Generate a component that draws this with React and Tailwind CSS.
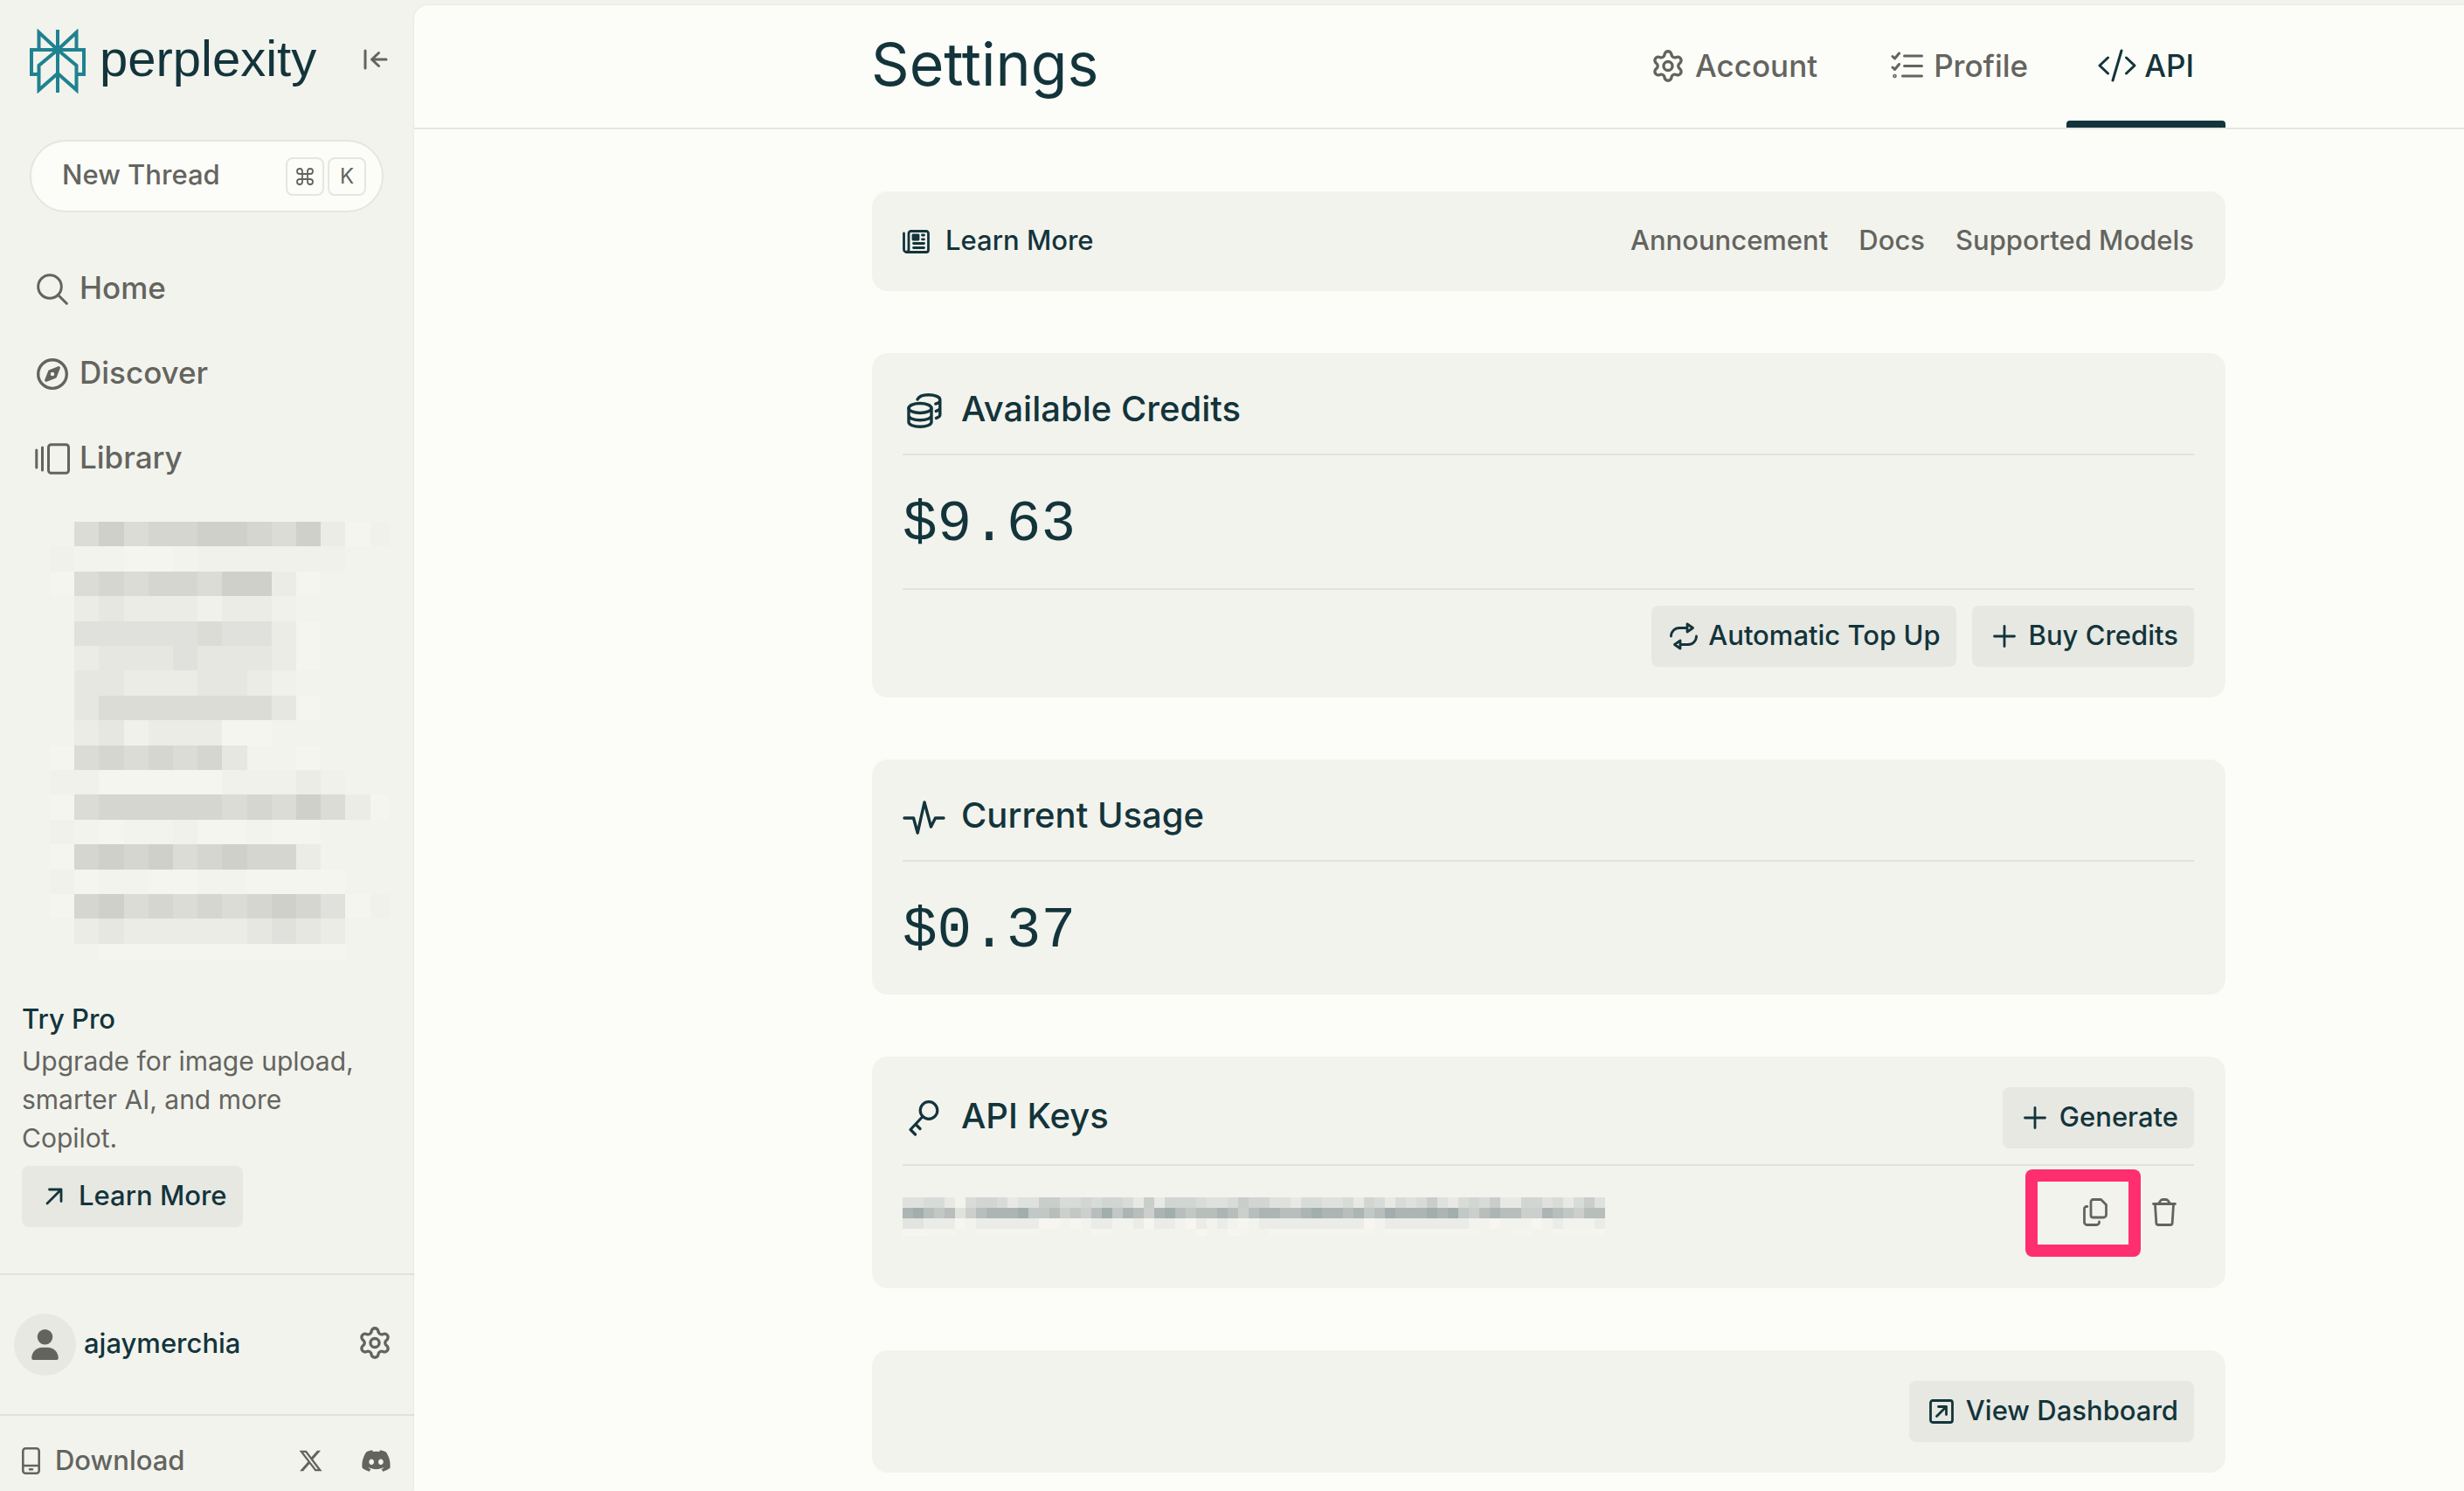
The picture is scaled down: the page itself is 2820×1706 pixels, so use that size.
import React from "react";
import { Command, Settings } from "lucide-react";
import { FaDiscord, FaRegCompass, FaUser, FaXTwitter } from "react-icons/fa6";

function Glyph({ w, h, stroke = 3, className = "", children }) {
  return (
    <svg
      aria-hidden="true"
      width={w}
      height={h}
      viewBox={`0 0 ${w} ${h}`}
      fill="none"
      stroke="currentColor"
      strokeWidth={stroke}
      strokeLinecap="round"
      strokeLinejoin="round"
      className={`shrink-0 ${className}`}
    >
      {children}
    </svg>
  );
}

const LogoMark = () => (
  <svg aria-hidden="true" width="64" height="74" viewBox="0 0 64 74" fill="none" stroke="#1f8290" strokeWidth="4">
    <path d="M32 1v72" />
    <path d="M32 24 10.5 4v20M32 24 53.5 4v20" />
    <path d="M10.5 52H2V24h60v28h-8.500" />
    <path d="M32 24 10.500 42v28L32 51M32 24l21.500 18v28L32 51" />
  </svg>
);

const CollapseIcon = () => (
  <Glyph w={28} h={24}>
    <path d="M2 2v20M9.500 12H26M17.500 4.500l-8 7.500 8 7.500" />
  </Glyph>
);

const SearchIcon = () => (
  <Glyph w={36} h={36}>
    <circle cx="15" cy="15" r="13.300" />
    <path d="m24.500 24.500 9.800 9.800" />
  </Glyph>
);

const LibraryIcon = () => (
  <Glyph w={40} h={36}>
    <path d="M1.800 8v20M8.500 5v26" />
    <rect x="15.500" y="1.800" width="23" height="32.500" rx="3" />
  </Glyph>
);

const GearIcon = () => (
  <Settings aria-hidden="true" className="h-[37px] w-[36px] shrink-0" viewBox="1.4 1 21.2 22" strokeWidth={2} />
);

const ChecklistIcon = () => (
  <Glyph w={37} h={32}>
    <path d="M2 5.500 4.500 8 9.500 2M2 18l2.500 2.500 5-6M15.500 5h20M15.500 16.500h20M13.500 28h22" />
    <circle cx="4.500" cy="28" r="0.800" />
  </Glyph>
);

const CodeIcon = () => (
  <Glyph w={44} h={38}>
    <path d="M11.500 10 2 19l9.500 9M32.500 10 42 19l-9.500 9M27 2l-10 34" />
  </Glyph>
);

const NewsIcon = () => (
  <Glyph w={31} h={27} stroke={2.8}>
    <path d="M1.500 4v18.500a3 3 0 0 0 3 3H27a2.500 2.500 0 0 0 2.500-2.500V4A2.500 2.500 0 0 0 27 1.500H9.500A2.500 2.500 0 0 0 7 4v18.500a3 3 0 0 1-2.700 3" />
    <path d="M12.500 15.500h12M12.500 20.500h12M22.500 6h2M22.500 10.800h2" />
    <rect x="12" y="6" width="6" height="5" fill="currentColor" />
  </Glyph>
);

const CoinsIcon = () => (
  <Glyph w={40} h={40} stroke={3.400}>
    <ellipse cx="15" cy="17" rx="13" ry="5.500" />
    <path d="M2 17v16c0 3 5.800 5.300 13 5.300S28 36 28 33V17M2 25.500c0 3 5.800 5.300 13 5.300s13-2.300 13-5.300" />
    <path d="M12 7c1.500-3 6.500-5.200 12.500-5.200 7.500 0 13.300 2.300 13.300 5.400v17.500c0 1.500-1.800 2.800-4.300 3.700M37.800 8c0 1.700-2 3.200-5 4.100M37.800 16.500c0 1.600-1.800 3-4.500 3.900" />
  </Glyph>
);

const PulseIcon = () => (
  <Glyph w={49} h={39} stroke={3.400}>
    <path d="M2 20h10.500l4.700 17L25 2l7.500 28 5-10H47" />
  </Glyph>
);

const KeyIcon = () => (
  <Glyph w={35} h={41} stroke={3.200}>
    <circle cx="23" cy="11.500" r="9.800" />
    <path d="M16 18.500 2 33.500l5.500 5.500M8 27.500l5 5" />
  </Glyph>
);

const RepeatIcon = () => (
  <Glyph w={32} h={32} stroke={2.800}>
    <path d="M1.500 16a9.500 9.500 0 0 1 9.500-9.500h9V2l6.500 4.500L20 11V6.500M30.500 16A9.500 9.500 0 0 1 21 25.500h-9V21l-6.500 4.500L12 30v-4.500" />
  </Glyph>
);

const PlusIcon = () => (
  <Glyph w={26} h={26} stroke={2.800}>
    <path d="M13 1.500v23M1.500 13h23" />
  </Glyph>
);

const ArrowIcon = () => (
  <Glyph w={20} h={20} stroke={2.800}>
    <path d="M2 18 18 2M4.500 2H18v13.500" />
  </Glyph>
);

const OpenIcon = () => (
  <Glyph w={28} h={28} stroke={2.800}>
    <rect x="1.500" y="1.500" width="25" height="25" rx="2.500" />
    <path d="M8.500 19.500 19 9M10.500 8.500h9v9" />
  </Glyph>
);

const CopyIcon = () => (
  <Glyph w={28} h={32} stroke={2.800}>
    <path d="M11.500 1.500h9l6 6V19a3 3 0 0 1-3 3h-12a2.500 2.500 0 0 1-2.500-2.500V4a2.500 2.500 0 0 1 2.500-2.500z" />
    <path d="M4.800 9.500H4A2.500 2.500 0 0 0 1.500 12v15.500a3 3 0 0 0 3 3h11a3 3 0 0 0 3-3V27" />
  </Glyph>
);

const TrashIcon = () => (
  <Glyph w={28} h={32} stroke={2.800}>
    <path d="M1.500 6.500h25M7.500 6l2.300-3.200a3 3 0 0 1 2.400-1.300h3.600a3 3 0 0 1 2.400 1.300L20.500 6M3.500 7l1.300 21a2.500 2.500 0 0 0 2.500 2.500h13.400a2.500 2.500 0 0 0 2.500-2.500L24.500 7" />
  </Glyph>
);

const PhoneIcon = () => (
  <Glyph w={21} h={31} stroke={2.600}>
    <rect x="1.300" y="1.300" width="18.400" height="28.400" rx="3" />
    <path d="M1.500 21h18M9 25.300h3" />
  </Glyph>
);

const SHADES = {
  w: "#f4f5ef", 1: "#f0f1eb", 2: "#ebece6", 3: "#e6e7e1", 4: "#e0e1dc", 5: "#dbdcd6", 6: "#d5d6d0", 7: "#cfd0ca",
  A: "#c9cecb", B: "#d1d6d2", C: "#d8dcd8", D: "#dfe1de", E: "#e8e9e4",
  a: "#a2aeae", b: "#adb5b4", c: "#b7bebc", d: "#c2c8c6", e: "#cccfcc", f: "#e0e2de",
  g: "#e1e4df", h: "#ebece7", i: "#f7f5f0",
};

function Mosaic({ rows, cw, ch, width, height, label }) {
  return (
    <svg role="img" aria-label={label} width={width} height={height} viewBox={`0 0 ${width} ${height}`} shapeRendering="crispEdges" className="block shrink-0">
      {rows.map((row, r) =>
        [...row].map((k, c) =>
          SHADES[k] ? (
            <rect key={`${r}-${c}`} x={c * cw} y={r * ch} width={cw} height={ch} fill={SHADES[k]} />
          ) : null
        )
      )}
    </svg>
  );
}

const THREAD_ROWS = [
  ".57566776572w1",
  "1..ww.111111",
  "w565665772w",
  ".232221221",
  ".444445442w",
  ".233343332w",
  ".332223321",
  ".355555553w",
  ".231222ww",
  "w5656563..w",
  "11wwwww11121",
  "w566666565752w",
  "1.w..1ww.ww",
  "w6767567662",
  "1w..ww..wwww",
  "w67565656764w1",
  ".23222223432",
  "..wwwwwwwwww",
];

const KEY_ROWS = [
  "DDCCE.CBBCEDDAACCBCBBCEAEBBBCDDCABBDDECCDDCEBCECDCADECBCAEEBBDCECAD",
  "bacdcfecbbbaddcedecadbcebacdccbcecbbccbabbcbdcabbbabadecbcceebcdecc",
  "gghhhi.hhhhhhii.i.hh..hihh.ih.h.i.hhhhhhhhhhi.hhhhhhhh..i...i.h...h",
  "iiwww..wwwwww.....ww........i..iw..wwwwwwwwww.wwwwwwwww...ww..wwwww",
];

const Slot = ({ children }) => <span className="flex w-[44px] shrink-0 justify-center">{children}</span>;
const SmallSlot = ({ children }) => <span className="flex w-[38px] shrink-0 justify-center">{children}</span>;
const Label = ({ children }) => <span className="pb-[2px]">{children}</span>;

function ActionButton({ icon, children }) {
  return (
    <button type="button" className="flex h-[70px] items-center gap-[9px] rounded-lg bg-[#e7e8e2] px-[18px] text-[31px] leading-[44px] font-medium whitespace-nowrap text-[#13343b]">
      <SmallSlot>{icon}</SmallSlot>
      <Label>{children}</Label>
    </button>
  );
}

function CardTitle({ icon, children }) {
  return (
    <h2 className="flex h-[62px] items-center gap-[18px] text-[40px] font-medium whitespace-nowrap">
      <span className="flex w-[49px] justify-center">{icon}</span>
      <span className="pb-1">{children}</span>
    </h2>
  );
}

const Amount = ({ children }) => (
  <p className="pt-10 pb-8 font-['Liberation_Mono',monospace] text-[66px] leading-[80px]">{children}</p>
);

const NAV = [
  ["Home", <SearchIcon />],
  ["Discover", <FaRegCompass aria-hidden="true" className="size-[36px]" />],
  ["Library", <LibraryIcon />],
];

const TABS = [
  ["Account", <GearIcon />, false],
  ["Profile", <ChecklistIcon />, false],
  ["API", <CodeIcon />, true],
];

function Sidebar() {
  return (
    <aside className="flex min-h-screen w-[474px] shrink-0 flex-col text-[#64645f]">
      <div className="flex items-center justify-between pt-[33px] pr-[30px] pl-[34px]">
        <a href="#home" className="flex items-center gap-4 text-[#13343b]">
          <LogoMark />
          <span className="pb-[6px] font-['Liberation_Sans',sans-serif] text-[58px] leading-[68px]">perplexity</span>
        </a>
        <button type="button" aria-label="Collapse sidebar" className="pb-[5px]">
          <CollapseIcon />
        </button>
      </div>

      <button type="button" className="mt-[53px] mr-[35px] ml-[34px] flex h-[83px] items-center gap-1 rounded-full border-2 border-[#e5e6e0] bg-[#fcfdf8] pr-[18px] pl-[35px] text-[31px] font-medium">
        <span className="mr-auto pb-[2px]">New Thread</span>
        <kbd className="flex size-[44px] items-center justify-center rounded-lg border-2 border-[#e5e6e0]">
          <Command aria-label="Command" className="size-[24px]" strokeWidth={1.8} />
        </kbd>
        <kbd className="flex size-[44px] items-center justify-center rounded-lg border-2 border-[#e5e6e0] font-['Inter',sans-serif] text-[24px] font-normal">K</kbd>
      </button>

      <nav aria-label="Main" className="mt-[39px] flex flex-col pl-[38px]">
        {NAV.map(([label, icon]) => (
          <a key={label} href={`#${label.toLowerCase()}`} className="flex h-[97px] items-center gap-[9px] text-[35px] font-medium">
            <Slot>{icon}</Slot>
            <Label>{label}</Label>
          </a>
        ))}
      </nav>

      <div className="mt-[24px] pl-[57px]">
        <Mosaic rows={THREAD_ROWS} cw={28.2} ch={28.4} width={388} height={501} label="Recent threads, hidden" />
      </div>

      <section className="mt-auto flex flex-col items-start px-[25px] pb-[53px] leading-[44px]">
        <h2 className="pb-1 text-[31px] leading-[44px] font-medium text-[#13343b]">Try Pro</h2>
        <p className="max-w-[400px] pb-[10px] text-[30px] leading-[44px]">Upgrade for image upload, smarter AI, and more Copilot.</p>
        <ActionButton icon={<ArrowIcon />}>Learn More</ActionButton>
      </section>

      <div className="flex h-[161px] items-center gap-[9px] border-t-2 border-[#e1e2dd] pr-[27px] pl-4">
        <span className="flex size-[71px] items-center justify-center rounded-full bg-[#e7e8e2]">
          <FaUser aria-hidden="true" className="h-[35px] w-[31px]" />
        </span>
        <span className="mr-auto pb-[2px] text-[31px] font-medium text-[#13343b]">ajaymerchia</span>
        <button type="button" aria-label="Settings" className="pb-[5px]">
          <GearIcon />
        </button>
      </div>

      <div className="flex h-[88px] items-center border-t-2 border-[#e1e2dd] pt-4 pr-[26px] pl-4">
        <a href="#download" className="mr-auto flex items-center gap-[9px] text-[31px] font-medium">
          <SmallSlot><PhoneIcon /></SmallSlot>
          Download
        </a>
        <a href="#x" aria-label="X" className="mr-[43px]">
          <FaXTwitter className="size-[29px]" />
        </a>
        <a href="#discord" aria-label="Discord">
          <FaDiscord className="size-[35px]" />
        </a>
      </div>
    </aside>
  );
}

export default function App() {
  return (
    <div className="flex min-h-screen bg-[#f2f3ed] font-['Inter',sans-serif] text-[#13343b]">
      <Sidebar />
      <main className="mt-[6px] min-w-0 flex-1 rounded-tl-2xl bg-[#fcfdf8] shadow-[0_0_4px_rgba(0,0,0,0.06)]">
        <header className="flex h-[142px] items-center justify-between border-b-2 border-[#e5e6e0] pr-[273px] pl-[523px]">
          <h1 className="pb-[6px] text-[68px] leading-[80px]">Settings</h1>
          <nav aria-label="Settings sections" className="flex gap-2 self-stretch">
            {TABS.map(([label, icon, active]) => (
              <a
                key={label}
                href={`#${label.toLowerCase()}`}
                aria-current={active ? "page" : undefined}
                className={`relative flex items-center gap-[9px] px-9 pb-[2px] text-[35px] font-medium ${active ? "text-[#13343b]" : "text-[#64645f]"}`}
              >
                <Slot>{icon}</Slot>
                <span>{label}</span>
                {active && <span className="absolute inset-x-0 bottom-0 h-2 rounded-t bg-[#13343b]" />}
              </a>
            ))}
          </nav>
        </header>

        <div className="flex flex-col gap-[71px] pt-[71px] pr-[273px] pb-[18px] pl-[524px]">
          <section className="flex h-[114px] items-center justify-between rounded-[18px] bg-[#f2f3ed] pr-9 pl-[35px] text-[31px] leading-[44px] font-medium">
            <h2 className="flex items-center gap-[18px]">
              <NewsIcon />
              <Label>Learn More</Label>
            </h2>
            <div className="flex gap-[35px] pb-[2px] text-[#64645f]">
              <a href="#announcement">Announcement</a>
              <a href="#docs">Docs</a>
              <a href="#models">Supported Models</a>
            </div>
          </section>

          <section className="rounded-[18px] bg-[#f2f3ed] py-[35px] pr-9 pl-[35px]">
            <div className="pb-[18px]">
              <CardTitle icon={<CoinsIcon />}>Available Credits</CardTitle>
            </div>
            <div className="border-y-2 border-[#e1e2dd]">
              <Amount>$9.63</Amount>
            </div>
            <div className="flex justify-end gap-[18px] pt-[18px]">
              <ActionButton icon={<RepeatIcon />}>Automatic Top Up</ActionButton>
              <ActionButton icon={<PlusIcon />}>Buy Credits</ActionButton>
            </div>
          </section>

          <section className="rounded-[18px] bg-[#f2f3ed] pt-[35px] pr-9 pl-[35px]">
            <div className="border-b-2 border-[#e1e2dd] pb-[18px]">
              <CardTitle icon={<PulseIcon />}>Current Usage</CardTitle>
            </div>
            <Amount>$0.37</Amount>
          </section>

          <section className="rounded-[18px] bg-[#f2f3ed] pt-[35px] pr-9 pb-[52px] pl-[35px]">
            <div className="flex items-center justify-between border-b-2 border-[#e1e2dd] pb-[18px]">
              <CardTitle icon={<KeyIcon />}>API Keys</CardTitle>
              <ActionButton icon={<PlusIcon />}>Generate</ActionButton>
            </div>
            <div className="flex items-center justify-between pt-[18px]">
              <div className="pt-[10px]">
                <Mosaic rows={KEY_ROWS} cw={12} ch={12} width={804} height={44} label="API key, hidden" />
              </div>
              <div className="relative flex h-[70px] items-center gap-[51px] pr-[20px] text-[#64645f]">
                <button type="button" aria-label="Copy key">
                  <CopyIcon />
                </button>
                <button type="button" aria-label="Delete key">
                  <TrashIcon />
                </button>
                <span className="pointer-events-none absolute -top-[14px] right-[61px] h-[100px] w-[132px] rounded-lg bg-[#ff2f6e] [clip-path:polygon(evenodd,0_0,100%_0,100%_100%,0_100%,0_0,14px_14px,118px_14px,118px_86px,14px_86px,14px_14px)]" />
              </div>
            </div>
          </section>

          <section className="flex justify-end rounded-[18px] bg-[#f2f3ed] py-[35px] pr-9 pl-[35px]">
            <ActionButton icon={<OpenIcon />}>View Dashboard</ActionButton>
          </section>
        </div>
      </main>
    </div>
  );
}
